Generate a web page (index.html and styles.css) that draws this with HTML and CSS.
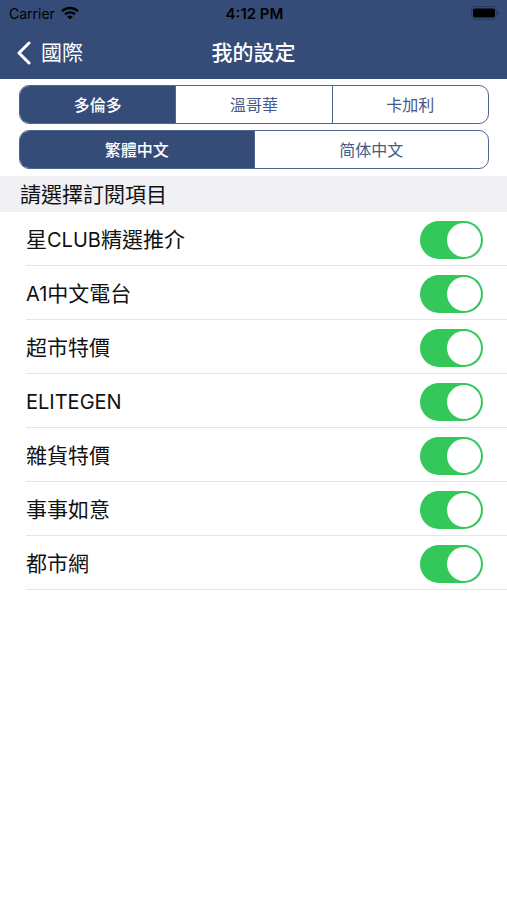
FILE: index.html
```html
<!DOCTYPE html>
<html lang="zh-Hant">
<head>
    <meta charset="UTF-8">
    <meta name="viewport" content="width=device-width, initial-scale=1.0">
    <title>我的設定</title>
    <link rel="stylesheet" href="styles.css">
</head>
<body>
    <!-- Status bar and navigation -->
    <header class="top">
        <div class="status-bar">
            <div class="carrier">
                <span>Carrier</span>
                <svg class="wifi" viewBox="0 0 18 14" width="18" height="14" aria-hidden="true">
                    <path d="M1 5.2 A11.5 11.5 0 0 1 17 5.2" fill="none" stroke="#000" stroke-width="2.4"/>
                    <path d="M4 8.4 A7.2 7.2 0 0 1 14 8.4" fill="none" stroke="#000" stroke-width="2.3"/>
                    <path d="M9 13.6 L6.2 10.8 A4 4 0 0 1 11.8 10.8 Z" fill="#000"/>
                </svg>
            </div>
            <span class="time">4:12 PM</span>
            <svg class="battery" viewBox="0 0 30 14" width="30" height="14" aria-hidden="true">
                <rect x="1.5" y="0.5" width="25" height="13" rx="4" fill="none" stroke="#263a61"/>
                <rect x="3" y="2.5" width="22" height="9" rx="2" fill="#000"/>
                <path d="M28 5 Q30 7 28 9 Z" fill="#1d2b49"/>
            </svg>
        </div>
        <nav class="nav-bar">
            <a class="back" href="#">
                <svg viewBox="0 0 14 24" width="14" height="24" aria-hidden="true">
                    <path d="M12 2 L2 12 L12 22" fill="none" stroke="#fff" stroke-width="3" stroke-linecap="round" stroke-linejoin="round"/>
                </svg>
                <span>國際</span>
            </a>
            <h1>我的設定</h1>
        </nav>
    </header>

    <main>
        <!-- City and language -->
        <div class="segments">
            <div class="segmented" role="radiogroup" aria-label="城市">
                <label><input type="radio" name="city" checked><span>多倫多</span></label>
                <label><input type="radio" name="city"><span>溫哥華</span></label>
                <label><input type="radio" name="city"><span>卡加利</span></label>
            </div>
            <div class="segmented" role="radiogroup" aria-label="語言">
                <label><input type="radio" name="language" checked><span>繁體中文</span></label>
                <label lang="zh-Hans"><input type="radio" name="language"><span>简体中文</span></label>
            </div>
        </div>

        <!-- Subscriptions -->
        <h2>請選擇訂閱項目</h2>
        <ul class="topics">
            <li><label for="club">星<span class="latin">CLUB</span>精選推介</label><input class="switch" type="checkbox" id="club" checked></li>
            <li><label for="a1"><span class="latin">A1</span>中文電台</label><input class="switch" type="checkbox" id="a1" checked></li>
            <li><label for="market">超市特價</label><input class="switch" type="checkbox" id="market" checked></li>
            <li><label for="elitegen"><span class="latin">ELITEGEN</span></label><input class="switch" type="checkbox" id="elitegen" checked></li>
            <li><label for="grocery">雜貨特價</label><input class="switch" type="checkbox" id="grocery" checked></li>
            <li><label for="ruyi">事事如意</label><input class="switch" type="checkbox" id="ruyi" checked></li>
            <li><label for="dushi">都市網</label><input class="switch" type="checkbox" id="dushi" checked></li>
        </ul>
    </main>
</body>
</html>
```

FILE: styles.css
```css
/* Global Styles */
* {
    margin: 0;
    padding: 0;
    box-sizing: border-box;
}

body {
    font-family: Inter, "Noto Sans CJK TC", sans-serif;
    background-color: #fff;
    color: #111;
}

/* Status bar and navigation */
.top {
    background-color: #354c79;
}

.status-bar,
.nav-bar {
    display: grid;
    grid-template-columns: 1fr auto 1fr;
    align-items: center;
}

.status-bar {
    height: 28px;
    padding: 0 7px 2px 9px;
    font-size: 14px;
    color: #000;
}

.carrier {
    display: flex;
    align-items: center;
    gap: 6px;
}

.time {
    font-size: 15px;
    font-weight: 600;
}

.battery {
    justify-self: end;
}

.nav-bar {
    height: 51px;
    padding: 0 17px 2px;
    color: #fff;
}

.back {
    display: flex;
    align-items: center;
    gap: 10px;
    color: #fff;
    font-size: 21px;
    line-height: 32px;
    text-decoration: none;
}

.nav-bar h1 {
    grid-column: 2;
    font-size: 21px;
    font-weight: 500;
    line-height: 32px;
}

/* Segmented controls */
.segments {
    display: flex;
    flex-direction: column;
    gap: 6px;
    padding: 6px 18px 7px 19px;
}

.segmented {
    display: flex;
    height: 39px;
    border: 1px solid #506590;
    border-radius: 10px;
    overflow: hidden;
}

.segmented label {
    flex: 1;
    display: flex;
    position: relative;
}

.segmented label + label {
    border-left: 1px solid #506590;
}

.segmented input {
    position: absolute;
    opacity: 0;
}

.segmented span {
    flex: 1;
    display: flex;
    align-items: center;
    justify-content: center;
    padding-bottom: 2px;
    font-size: 16px;
    color: #455a88;
}

.segmented input:checked + span {
    background-color: #354c79;
    color: #fff;
    font-weight: 500;
}

.segmented label:lang(zh-Hans) {
    font-family: Inter, "Noto Sans CJK SC", sans-serif;
}

/* Subscriptions */
h2 {
    padding: 2px 20px 0;
    background-color: #f0f0f5;
    font-size: 21px;
    font-weight: 400;
    line-height: 34px;
}

.topics {
    list-style-type: none;
}

.topics li {
    display: flex;
    align-items: center;
    justify-content: space-between;
    height: 54px;
    margin-left: 26px;
    padding-right: 24px;
    padding-top: 2px;
    border-bottom: 1px solid #e6e6e8;
    font-size: 21px;
    line-height: 32px;
}

.latin {
    font-size: 20px;
}

.switch {
    appearance: none;
    display: flex;
    width: 63px;
    height: 38px;
    padding: 2px;
    border-radius: 19px;
    background-color: #e9e9ea;
    cursor: pointer;
}

.switch::before {
    content: "";
    width: 34px;
    height: 34px;
    border-radius: 50%;
    background-color: #fff;
}

.switch:checked {
    justify-content: flex-end;
    background-color: #34c759;
}
```
